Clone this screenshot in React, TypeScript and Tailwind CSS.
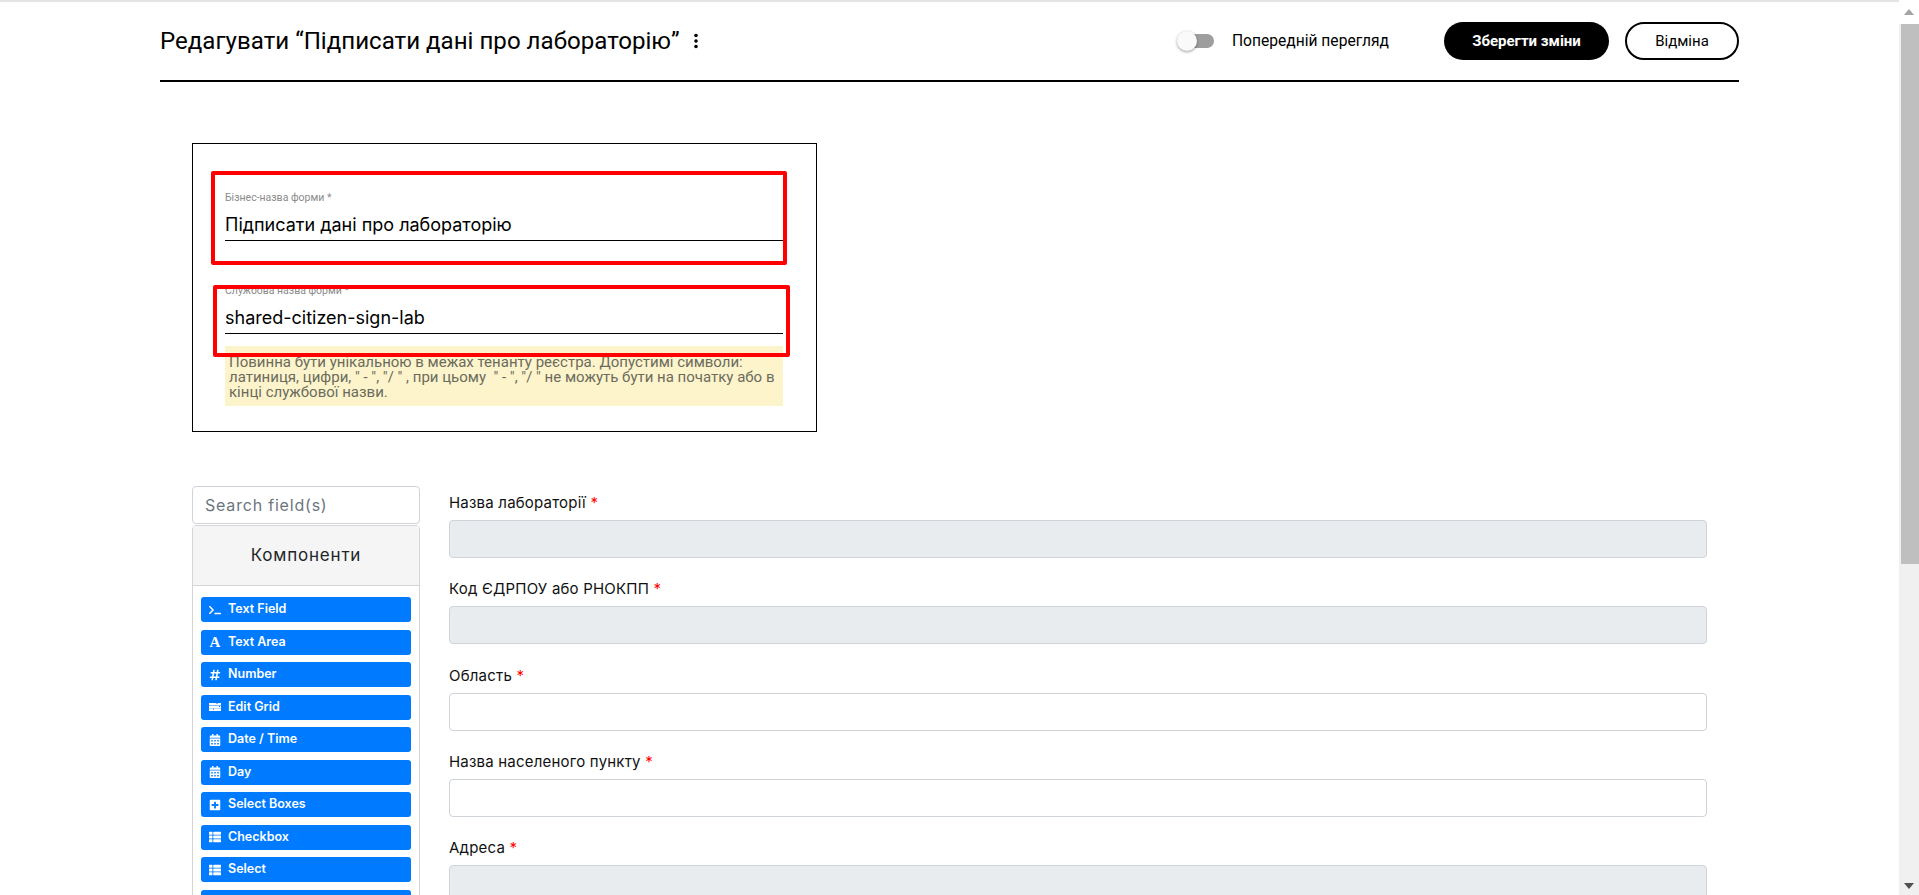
import React from "react";
import {
  FaTerminal,
  FaHashtag,
  FaCalendarAlt,
  FaPlusSquare,
  FaThList,
} from "react-icons/fa";

const TasksIcon: React.FC<{ className?: string }> = ({ className }) => (
  <svg className={className} viewBox="0 0 12 12" fill="currentColor">
    <path d="M0 2h7.500v1H8.500V2H12v2.600H0zM0 5h10v1h1V5h1v2.400H0zM0 7.800h4v1h1v-1h7V10H0z" />
  </svg>
);

const FontIcon: React.FC<{ className?: string }> = ({ className }) => (
  <span className={`${className} flex items-center justify-center font-['Liberation_Serif',serif] text-[15px] font-bold leading-none`}>
    A
  </span>
);

const components = [
  { label: "Text Field", icon: FaTerminal },
  { label: "Text Area", icon: FontIcon },
  { label: "Number", icon: FaHashtag },
  { label: "Edit Grid", icon: TasksIcon },
  { label: "Date / Time", icon: FaCalendarAlt },
  { label: "Day", icon: FaCalendarAlt },
  { label: "Select Boxes", icon: FaPlusSquare },
  { label: "Checkbox", icon: FaThList },
  { label: "Select", icon: FaThList },
];

const fields = [
  { label: "Назва лабораторії", disabled: true },
  { label: "Код ЄДРПОУ або РНОКПП", disabled: true },
  { label: "Область", disabled: false },
  { label: "Назва населеного пункту", disabled: false },
  { label: "Адреса", disabled: true },
];

const App: React.FC = () => {
  return (
    <div className="flex h-[895px] overflow-hidden bg-white font-['Roboto',sans-serif] text-black">
      <main className="min-w-0 flex-1 overflow-hidden border-t-2 border-[#e4e4e4]">
        <div className="ml-[160px] w-[1579px]">
          {/* Шапка */}
          <header className="flex h-[80px] items-center border-b-2 border-black">
            <h1 className="text-[24.100px] leading-none">Редагувати “Підписати дані про лабораторію”</h1>
            <svg className="ml-[13px]" width="6" height="16" viewBox="0 0 6 16" fill="#000">
              <circle cx="3" cy="2.500" r="1.800" />
              <circle cx="3" cy="8" r="1.800" />
              <circle cx="3" cy="13.500" r="1.800" />
            </svg>
            <div className="ml-auto flex items-center">
              <div className="relative mr-[18px] h-[14px] w-[36px] rounded-full bg-[#9e9e9e]">
                <div className="absolute left-[-1px] top-[-3px] h-[20px] w-[20px] rounded-full bg-[#fafafa] shadow-[0_1px_3px_rgba(0,0,0,0.4)]" />
              </div>
              <span className="mr-[54px] w-[158px] pt-[1px] text-[15.600px]">Попередній перегляд</span>
              <button className="h-[38px] w-[165px] rounded-full bg-black pt-[1px] text-[15px] font-bold text-white">
                Зберегти зміни
              </button>
              <button className="ml-[16px] h-[38px] w-[114px] rounded-full border-2 border-black pt-[1px] text-[15px]">
                Відміна
              </button>
            </div>
          </header>

          {/* Налаштування форми */}
          <section className="relative ml-[32px] mt-[61px] h-[289px] w-[625px] border border-black px-[32px] pt-[47px]">
            <label className="block text-[10.500px] leading-[14px] text-[#8a8a8a]">Бізнес-назва форми *</label>
            <div className="mt-[3px] flex h-[33px] w-[558px] items-center border-b border-black pt-[1px] font-['Inter',sans-serif] text-[18px]">
              Підписати дані про лабораторію
            </div>
            <label className="mt-[43px] block text-[10.500px] leading-[14px] text-[#8a8a8a]">Службова назва форми *</label>
            <div className="mt-[3px] flex h-[33px] w-[558px] items-center border-b border-black font-['Inter',sans-serif] text-[18px]">
              shared-citizen-sign-lab
            </div>
            <div className="mt-[12px] h-[60px] w-[558px] bg-[#fdf4cc] px-[4px] pt-[9px] text-[15px] leading-[15px] text-[#6b6b5c]">
              Повинна бути унікальною в межах тенанту реєстра. Допустимі символи:
              <br />
              латиниця, цифри, " - ", "/ " , при цьому &nbsp;" - ", "/ " не можуть бути на початку або в
              <br />
              кінці службової назви.
            </div>
            {/* Червоні рамки поверх скріншота */}
            <div className="absolute left-[18px] top-[27px] h-[94px] w-[576px] rounded-[2px] border-[4px] border-[#fe0000]" />
            <div className="absolute left-[20px] top-[141px] h-[72px] w-[577px] rounded-[2px] border-[4px] border-[#fe0000]" />
          </section>

          {/* Конструктор */}
          <section className="ml-[32px] mt-[54px] flex font-['Inter',sans-serif]">
            <aside className="w-[228px] shrink-0">
              <div className="flex h-[38px] items-center rounded-[4px] border border-[#ced4da] px-[12px] text-[16px] tracking-[0.8px] text-[#6c757d]">
                Search field(s)
              </div>
              <div className="mt-[1px] rounded-t-[4px] border border-[#d5d5d5]">
                <div className="flex h-[60px] items-center justify-center border-b border-[#d5d5d5] bg-[#f5f5f5] text-[17px] tracking-[0.8px] text-[#212529]">
                  Компоненти
                </div>
                <div className="flex flex-col gap-[7.500px] px-[8px] pt-[11px]">
                  {components.map((item) => (
                    <div
                      key={item.label}
                      className="flex h-[25px] items-center rounded-[3px] bg-[#007bff] pl-[8px] text-[12.500px] font-semibold text-white"
                    >
                      <item.icon className="mr-[7px] h-[12px] w-[12px] shrink-0" />
                      {item.label}
                    </div>
                  ))}
                  {/* наступна кнопка вже за краєм екрана */}
                  <div className="h-[25px] rounded-[3px] bg-[#007bff]" />
                </div>
              </div>
            </aside>
            <div className="ml-[29px] flex w-[1258px] flex-col gap-[20.300px] pt-[6px]">
              {fields.map((field) => (
                <div key={field.label}>
                  <label className="block h-[28px] text-[15px] leading-[21px] tracking-[0.2px] text-[#111111]">
                    {field.label} <span className="text-[#ff0000]">*</span>
                  </label>
                  <div
                    className={
                      field.disabled
                        ? "h-[38px] rounded-[4px] border border-[#ced4da] bg-[#e9ecef]"
                        : "h-[38px] rounded-[4px] border border-[#ced4da] bg-white"
                    }
                  />
                </div>
              ))}
            </div>
          </section>
        </div>
      </main>

      {/* Смуга прокрутки */}
      <div className="flex w-[20px] shrink-0 flex-col items-center bg-[#f0f0f0]">
        <div className="flex h-[24px] w-full items-center justify-center bg-white">
          <svg width="10" height="6" viewBox="0 0 10 6" fill="#a3a3a3">
            <path d="M5 0 10 6H0z" />
          </svg>
        </div>
        <div className="ml-[2px] h-[540px] w-[18px] bg-[#bfbfbf]" />
        <div className="mt-auto flex h-[18px] w-full items-center justify-center">
          <svg width="10" height="6" viewBox="0 0 10 6" fill="#505050">
            <path d="M0 0H10L5 6z" />
          </svg>
        </div>
      </div>
    </div>
  );
};

export default App;
